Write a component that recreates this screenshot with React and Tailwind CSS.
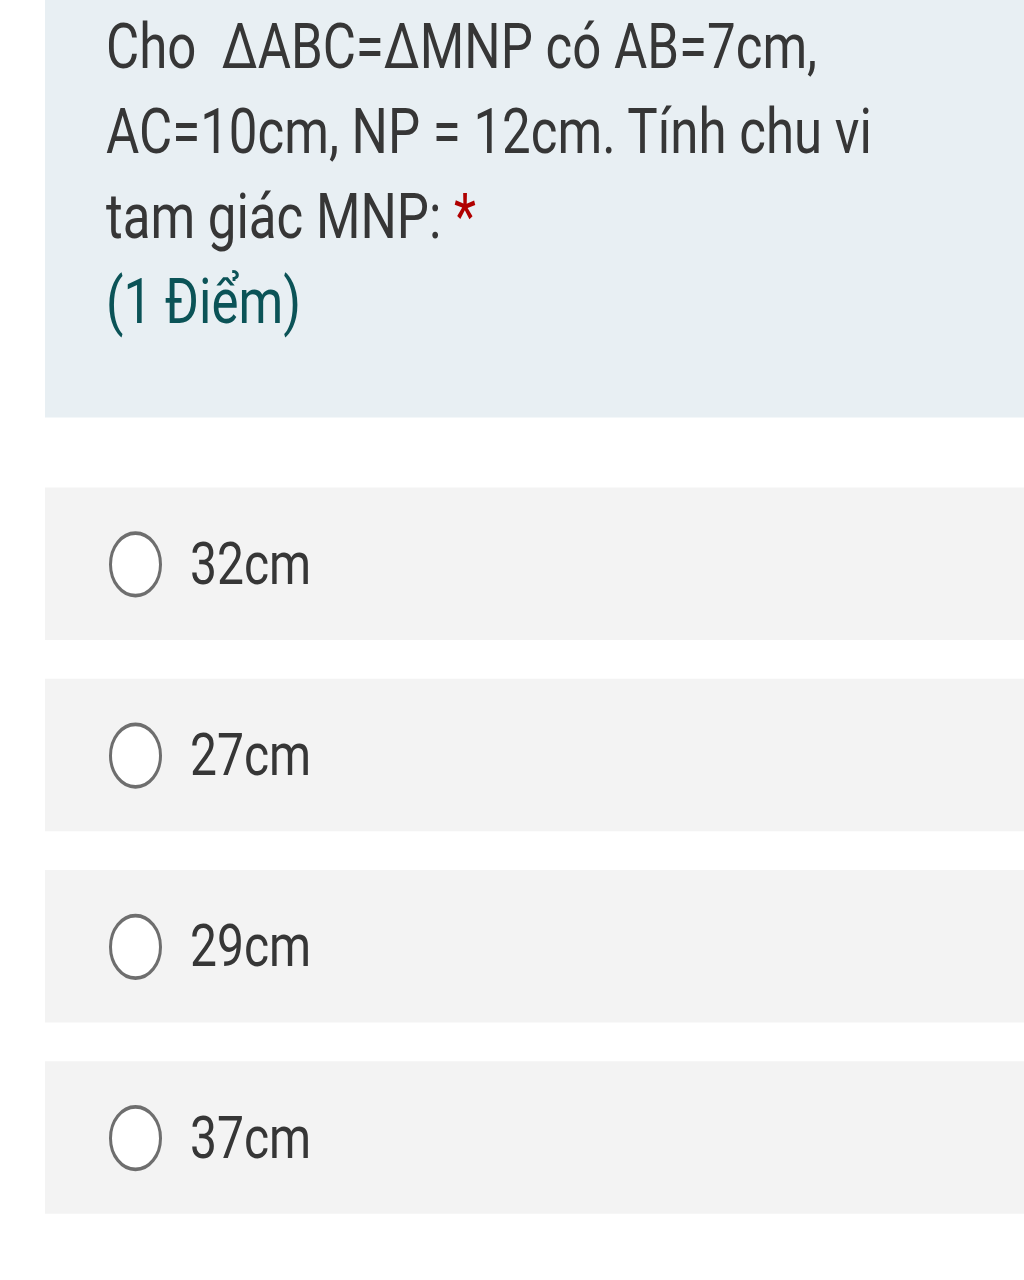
export default function App() {
  const options = ["32cm", "27cm", "29cm", "37cm"];
  return (
    <div className="w-[1024px] h-[1280px] bg-white">
      <div className="w-[1024px] h-[1024px] bg-white origin-top scale-y-[1.25]" style={{ fontFamily: "Roboto, 'Noto Sans', sans-serif" }}>
        <div className="ml-[45px] h-[334px] bg-[#e8eff3] pl-[61px] pt-[3px]">
          <div className="text-[51px] leading-[68px] text-[#363636]">
            <div>Cho&nbsp; ΔABC=ΔMNP có AB=7cm,</div>
            <div>AC=10cm, NP = 12cm. Tính chu vi</div>
            <div>
              tam giác MNP: <span className="text-[#b00000]">*</span>
            </div>
            <div className="text-[#0b5357]">(1 Điểm)</div>
          </div>
        </div>
        <div className="mt-[56px] ml-[45px] flex flex-col gap-[31px]">
          {options.map((o) => (
            <div key={o} className="h-[122px] bg-[#f3f3f3] flex items-center pl-[64px]">
              <div className="w-[53px] h-[53px] rounded-full border-[3px] border-[#6e6e6e] bg-white shrink-0" />
              <div className="ml-[28px] text-[48px] leading-[48px] text-[#363636]">{o}</div>
            </div>
          ))}
        </div>
      </div>
    </div>
  );
}
